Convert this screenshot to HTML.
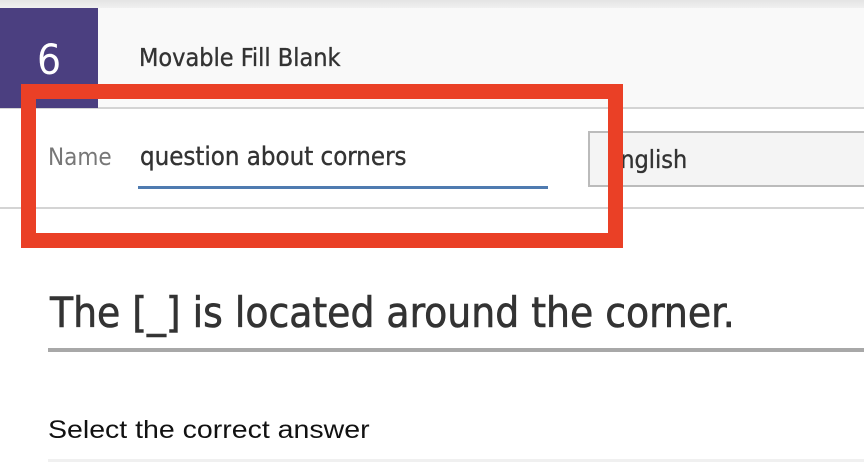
<!DOCTYPE html>
<html><head><style>
body{margin:0;width:864px;height:462px;overflow:hidden;background:#fff;font-family:"DejaVu Sans Condensed","DejaVu Sans",sans-serif;position:relative}
.t{-webkit-text-stroke:0.35px currentColor}
.top{position:absolute;left:0;top:0;width:864px;height:8px;background:linear-gradient(#e4e4e4,#f0f0f0)}
.hdr{position:absolute;left:0;top:8px;width:864px;height:99px;background:#f9f9f9;border-bottom:2px solid #d4d4d4}
.num{position:absolute;left:0;top:8px;width:98px;height:100px;background:#4b3f80;color:#fff;font-size:42px;text-align:center;line-height:104px}
.title{position:absolute;left:139px;top:43px;font-size:25px;color:#333}
.name{position:absolute;left:48px;top:143px;font-size:24px;color:#777}
.val{position:absolute;left:140px;top:142px;font-size:25.6px;color:#333}
.ul{position:absolute;left:138px;top:186px;width:410px;height:3px;background:#4f7bb0}
.lang{position:absolute;left:588px;top:131px;width:290px;height:56px;box-sizing:border-box;border:2px solid #bbb;background:#f4f4f4;font-size:25px;color:#333;line-height:54px;padding-left:16px}
.div{position:absolute;left:0;top:207px;width:864px;height:2px;background:#d4d4d4}
.red{position:absolute;left:21px;top:84px;width:572px;height:134px;border:15px solid #ea4026}
.h{position:absolute;left:50px;top:288px;font-size:42px;color:#333;white-space:nowrap;-webkit-text-stroke:0.6px #333}
.hl{position:absolute;left:48px;top:348px;width:816px;height:4px;background:#a8a8a8}
.sel{position:absolute;left:48px;top:416px;font-size:25px;color:#111;font-family:"Liberation Sans",sans-serif;transform:scaleX(1.14);transform-origin:left}
.bl{position:absolute;left:48px;top:459px;width:816px;height:3px;background:#f0f0f0}
</style></head><body>
<div class="top"></div><div class="hdr"></div>
<div class="num">6</div>
<div class="title t">Movable Fill Blank</div>
<div class="div"></div>
<div class="lang t">English</div>
<div class="name">Name</div>
<div class="val t">question about corners</div>
<div class="ul"></div>
<div class="red"></div>
<div class="h">The [_] is located around the corner.</div>
<div class="hl"></div>
<div class="sel">Select the correct answer</div>
<div class="bl"></div>
</body></html>
